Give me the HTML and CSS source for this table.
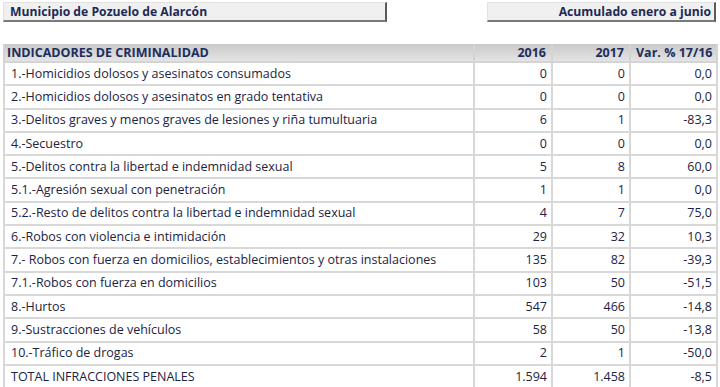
FILE: index.html
```html
<!DOCTYPE html>
<html lang="es">
<head>
<meta charset="utf-8">
<link rel="stylesheet" href="styles.css">
</head>
<body>
<div class="page">
  <div class="topbar">
    <div class="box box-left">Municipio de Pozuelo de Alarcón</div>
    <div class="box box-right">Acumulado enero a junio</div>
  </div>
  <table class="grid">
    <colgroup>
      <col class="c-label"><col class="c-num"><col class="c-num"><col class="c-var">
    </colgroup>
    <thead>
      <tr><th class="l">INDICADORES DE CRIMINALIDAD</th><th>2016</th><th>2017</th><th>Var. % 17/16</th></tr>
    </thead>
    <tbody>
      <tr><td class="l">1.-Homicidios dolosos y asesinatos consumados</td><td>0</td><td>0</td><td>0,0</td></tr>
      <tr><td class="l">2.-Homicidios dolosos y asesinatos en grado tentativa</td><td>0</td><td>0</td><td>0,0</td></tr>
      <tr><td class="l">3.-Delitos graves y menos graves de lesiones y riña tumultuaria</td><td>6</td><td>1</td><td>-83,3</td></tr>
      <tr><td class="l">4.-Secuestro</td><td>0</td><td>0</td><td>0,0</td></tr>
      <tr><td class="l">5.-Delitos contra la libertad e indemnidad sexual</td><td>5</td><td>8</td><td>60,0</td></tr>
      <tr><td class="l">5.1.-Agresión sexual con penetración</td><td>1</td><td>1</td><td>0,0</td></tr>
      <tr><td class="l">5.2.-Resto de delitos contra la libertad e indemnidad sexual</td><td>4</td><td>7</td><td>75,0</td></tr>
      <tr><td class="l">6.-Robos con violencia e intimidación</td><td>29</td><td>32</td><td>10,3</td></tr>
      <tr><td class="l">7.- Robos con fuerza en domicilios, establecimientos y otras instalaciones</td><td>135</td><td>82</td><td>-39,3</td></tr>
      <tr><td class="l">7.1.-Robos con fuerza en domicilios</td><td>103</td><td>50</td><td>-51,5</td></tr>
      <tr><td class="l">8.-Hurtos</td><td>547</td><td>466</td><td>-14,8</td></tr>
      <tr><td class="l">9.-Sustracciones de vehículos</td><td>58</td><td>50</td><td>-13,8</td></tr>
      <tr><td class="l">10.-Tráfico de drogas</td><td>2</td><td>1</td><td>-50,0</td></tr>
      <tr><td class="l">TOTAL INFRACCIONES PENALES</td><td>1.594</td><td>1.458</td><td>-8,5</td></tr>
    </tbody>
  </table>
</div>
</body>
</html>
```
FILE: styles.css
```css
html, body {
  margin: 0;
  padding: 0;
  background: #ffffff;
}
.page {
  padding: 2px 4px 0 3px;
  font-family: "Open Sans", "Liberation Sans", sans-serif;
  font-size: 12.5px;
  color: #1c2342;
}
.topbar {
  display: flex;
  justify-content: space-between;
  height: 20px;
}
.box {
  box-sizing: border-box;
  height: 20px;
  background: #f0f0f0;
  border-top: 1px solid #e2e2e2;
  border-left: 1px solid #e2e2e2;
  border-right: 2px solid #5a5a5a;
  border-bottom: 2px solid #7a7a7a;
  font-weight: bold;
  font-size: 12.2px;
  color: #1c2a55;
  line-height: 17px;
  padding: 0 4px 0 6px;
  white-space: nowrap;
}
.box-left { width: 384px; }
.box-right { width: 229px; text-align: right; padding-right: 3px; }
.grid {
  margin-top: 22px;
  width: 713px;
  border-collapse: collapse;
  table-layout: fixed;
}
.c-label { width: 470px; }
.c-num { width: 78px; }
.c-var { width: 87px; }
.grid th {
  height: 17px;
  padding: 0 5px 0 5px;
  font-weight: bold;
  font-size: 12.5px;
  color: #1c2d5c;
  text-align: right;
  background: linear-gradient(#c9c9c9, #e4e4e4);
  border: 2px solid #d4d4d4;
  border-top: 0;
  line-height: 16px;
  white-space: nowrap;
}
.grid th.l { text-align: left; padding-left: 2px; }
.grid td {
  height: 21.3px;
  padding: 0 4px 0 5px;
  text-align: right;
  border: 2px solid #d8d8d8;
  line-height: 16px;
  white-space: nowrap;
}
.grid td.l { text-align: left; padding-left: 6px; }
```
